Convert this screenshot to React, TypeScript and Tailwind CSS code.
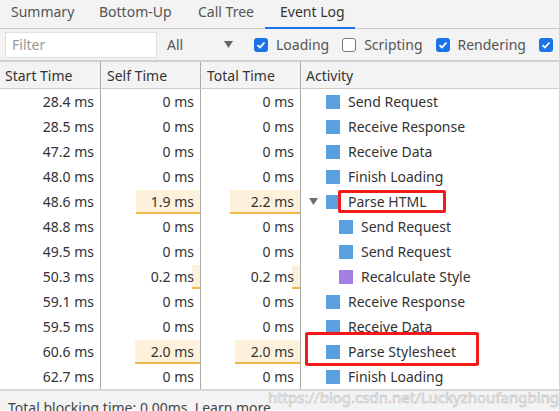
import React from 'react'

type Row = {
  start: string
  self: string
  total: string
  selfBar?: number
  totalBar?: number
  name: string
  color: string
  depth: number
  arrow?: boolean
}

const BLUE = 'bg-[#5a9fdf]'
const PURPLE = 'bg-[#a47fe3]'

const rows: Row[] = [
  { start: '28.4 ms', self: '0 ms', total: '0 ms', name: 'Send Request', color: BLUE, depth: 0 },
  { start: '28.5 ms', self: '0 ms', total: '0 ms', name: 'Receive Response', color: BLUE, depth: 0 },
  { start: '47.2 ms', self: '0 ms', total: '0 ms', name: 'Receive Data', color: BLUE, depth: 0 },
  { start: '48.0 ms', self: '0 ms', total: '0 ms', name: 'Finish Loading', color: BLUE, depth: 0 },
  { start: '48.6 ms', self: '1.9 ms', total: '2.2 ms', selfBar: 64, totalBar: 70, name: 'Parse HTML', color: BLUE, depth: 0, arrow: true },
  { start: '48.8 ms', self: '0 ms', total: '0 ms', name: 'Send Request', color: BLUE, depth: 1 },
  { start: '49.5 ms', self: '0 ms', total: '0 ms', name: 'Send Request', color: BLUE, depth: 1 },
  { start: '50.3 ms', self: '0.2 ms', total: '0.2 ms', selfBar: 8, totalBar: 8, name: 'Recalculate Style', color: PURPLE, depth: 1 },
  { start: '59.1 ms', self: '0 ms', total: '0 ms', name: 'Receive Response', color: BLUE, depth: 0 },
  { start: '59.5 ms', self: '0 ms', total: '0 ms', name: 'Receive Data', color: BLUE, depth: 0 },
  { start: '60.6 ms', self: '2.0 ms', total: '2.0 ms', selfBar: 65, totalBar: 65, name: 'Parse Stylesheet', color: BLUE, depth: 0 },
  { start: '62.7 ms', self: '0 ms', total: '0 ms', name: 'Finish Loading', color: BLUE, depth: 0 },
]

const Check = ({ on }: { on: boolean }) =>
  on ? (
    <span className="w-[14px] h-[14px] rounded-[3px] bg-[#1a73e8] flex items-center justify-center shrink-0">
      <svg width="10" height="10" viewBox="0 0 10 10">
        <path d="M1.5 5.2 L4 7.5 L8.5 2.5" stroke="white" strokeWidth="1.8" fill="none" />
      </svg>
    </span>
  ) : (
    <span className="w-[14px] h-[14px] rounded-[3px] border border-[#767676] bg-white shrink-0" />
  )

const TimeCell = ({ text, bar }: { text: string; bar?: number }) => (
  <div className="relative w-[100px] shrink-0 border-r border-[#aaa] h-full flex items-center justify-end pr-[6px]">
    {bar ? (
      <div
        className="absolute right-0 top-[1px] bottom-0 bg-[#fdf1dc] border-b-2 border-[#f5b94a]"
        style={{ width: bar }}
      />
    ) : null}
    <span className="relative">{text}</span>
  </div>
)

export default function App() {
  return (
    <div className="w-[559px] h-[411px] overflow-hidden bg-white text-[#333] text-[14px] relative" style={{ fontFamily: '"Segoe UI", "Noto Sans", sans-serif' }}>
      {/* tabs */}
      <div className="h-[29px] bg-[#f3f3f3] border-b border-[#ccc] flex text-[#555] whitespace-nowrap">
        <div className="pl-[11px] w-[99px] shrink-0 pt-[1px]">Summary</div>
        <div className="w-[99px] shrink-0 pt-[1px]">Bottom-Up</div>
        <div className="w-[67px] shrink-0 pt-[1px]">Call Tree</div>
        <div className="w-[90px] shrink-0 pl-[15px] pt-[1px] text-[#333] relative">
          Event Log
          <div className="absolute left-0 right-0 bottom-[-1px] h-[2px] bg-[#1a73e8]" />
        </div>
      </div>
      {/* filter bar */}
      <div className="h-[33px] bg-[#f3f3f3] flex items-center text-[#555] border-b-2 border-[#d0d0d0] whitespace-nowrap">
        <div className="ml-[5px] w-[152px] h-[26px] shrink-0 bg-white border border-[#e0e0e0] flex items-center pl-[6px] text-[#999]">Filter</div>
        <div className="ml-[10px] w-[70px] shrink-0 flex items-center justify-between pr-[4px]">
          <span>All</span>
          <svg width="9" height="7" viewBox="0 0 9 7"><path d="M0 0 H9 L4.5 7 Z" fill="#666" /></svg>
        </div>
        <div className="ml-[17px] shrink-0 flex items-center gap-[8px]"><Check on /> <span>Loading</span></div>
        <div className="ml-[13px] shrink-0 flex items-center gap-[8px]"><Check on={false} /> <span>Scripting</span></div>
        <div className="ml-[13px] shrink-0 flex items-center gap-[8px]"><Check on /> <span>Rendering</span></div>
        <div className="ml-[13px] shrink-0 flex items-center gap-[8px]"><Check on /> <span>Painting</span></div>
      </div>
      {/* header */}
      <div className="h-[27px] bg-[#f3f3f3] border-b border-[#ccc] flex whitespace-nowrap">
        <div className="w-[101px] shrink-0 border-r border-[#aaa] pl-[5px] flex items-center">Start Time</div>
        <div className="w-[100px] shrink-0 border-r border-[#aaa] pl-[6px] flex items-center">Self Time</div>
        <div className="w-[100px] shrink-0 border-r border-[#aaa] pl-[6px] flex items-center">Total Time</div>
        <div className="pl-[5px] flex items-center">Activity</div>
      </div>
      {/* rows */}
      <div>
        {rows.map((r, i) => (
          <div key={i} className="h-[25px] flex whitespace-nowrap">
            <div className="w-[101px] shrink-0 border-r border-[#aaa] h-full flex items-center justify-end pr-[6px]">{r.start}</div>
            <TimeCell text={r.self} bar={r.selfBar} />
            <TimeCell text={r.total} bar={r.totalBar} />
            <div className={`flex items-center h-full ${r.depth ? 'pl-[38px]' : 'pl-[25px]'} relative`}>
              {r.arrow && (
                <svg className="absolute left-[8px]" width="9" height="7" viewBox="0 0 9 7">
                  <path d="M0 0 H9 L4.5 7 Z" fill="#6e6e6e" />
                </svg>
              )}
              <span className={`w-[14px] h-[14px] ${r.color} mr-[8px]`} />
              <span>{r.name}</span>
            </div>
          </div>
        ))}
      </div>
      {/* status */}
      <div className="h-[21px] bg-[#f3f3f3] border-t-2 border-[#d8d8d8] pl-[8px] pt-[7px] whitespace-nowrap text-[#444] leading-[20px]">
        Total blocking time: 0.00ms. Learn more
      </div>
      {/* annotations */}
      <div className="absolute left-[338px] top-[190px] w-[108px] h-[23px] border-[3px] border-[#f41a1a] rounded-[2px]" />
      <div className="absolute left-[305px] top-[332px] w-[174px] h-[34px] border-[3px] border-[#f41a1a] rounded-[2px]" />
      <div className="absolute left-[268px] top-[386px] text-[15px] text-white whitespace-nowrap" style={{ WebkitTextStroke: '0.6px #bbb' }}>
        https://blog.csdn.net/Luckyzhoufangbing
      </div>
    </div>
  )
}
